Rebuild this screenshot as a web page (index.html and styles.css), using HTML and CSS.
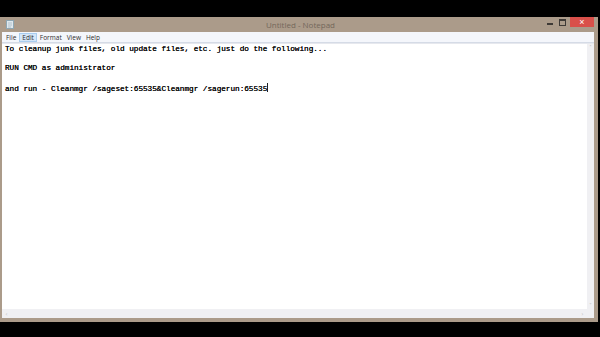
FILE: index.html
```html
<!DOCTYPE html>
<html>
<head>
<meta charset="utf-8">
<link rel="stylesheet" href="styles.css">
</head>
<body>
<div class="window">
  <div class="titlebar">
    <div class="appicon">
      <svg width="8" height="9" viewBox="0 0 8 9"><rect x="0.5" y="0.5" width="7" height="8" fill="#dfe9ee" stroke="#8fa7b3"/><path d="M2 3h4M2 5h4M2 7h3" stroke="#9fb3bd" stroke-width="0.7"/></svg>
    </div>
    <div class="title">Untitled - Notepad</div>
    <div class="controls">
      <div class="btn min"><span></span></div>
      <div class="btn max"><span></span></div>
      <div class="btn close">×</div>
    </div>
  </div>
  <div class="menubar">
    <span class="item">File</span>
    <span class="item active">Edit</span>
    <span class="item">Format</span>
    <span class="item">View</span>
    <span class="item">Help</span>
  </div>
  <div class="client">
    <div class="editrow">
      <div class="edit">To cleanup junk files, old update files, etc. just do the following...

RUN CMD as administrator

and run - Cleanmgr /sageset:65535&amp;Cleanmgr /sagerun:65535<span class="caret"></span></div>
      <div class="vscroll"><span class="arrow">˄</span><span class="arrow">˅</span></div>
    </div>
    <div class="hscroll">
      <span class="harrow">‹</span>
      <span class="hfill"></span>
      <span class="harrow">›</span>
      <span class="grip"></span>
    </div>
  </div>
</div>
</body>
</html>
```
FILE: styles.css
```css
html, body {
  margin: 0;
  padding: 0;
  background: #000;
  width: 600px;
  height: 337px;
  overflow: hidden;
}
.window {
  margin-top: 17px;
  width: 598px;
  height: 305px;
  box-sizing: border-box;
  background: #ab9b8a;
  padding: 0 4px 4px 2px;
  display: flex;
  flex-direction: column;
}
.titlebar {
  height: 15px;
  display: flex;
  align-items: center;
}
.appicon {
  width: 8px;
  height: 9px;
  margin-left: 4px;
  display: flex;
}
.title {
  flex: 1;
  text-align: center;
  font-family: "Open Sans", "Liberation Sans", sans-serif;
  font-size: 8px;
  color: #74685b;
  line-height: 15px;
  padding-left: 44px;
}
.controls {
  display: flex;
  align-self: flex-start;
  height: 11px;
}
.btn {
  width: 13px;
  height: 10px;
  display: flex;
  align-items: center;
  justify-content: center;
}
.min span {
  width: 6px;
  height: 2px;
  background: #3e3a36;
  margin-top: 4px;
}
.max span {
  width: 5px;
  height: 4px;
  border: 1px solid #3e3a36;
  border-top-width: 2px;
}
.close {
  width: 24px;
  height: 10px;
  background: #d9504a;
  color: #fff;
  font-family: "Liberation Sans", sans-serif;
  font-size: 9px;
  line-height: 10px;
  margin-left: 1px;
}
.menubar {
  height: 10px;
  background: #f4f6fb;
  border-bottom: 1px solid #d5dbe6;
  display: flex;
  align-items: center;
  padding-left: 2px;
  font-family: "Open Sans", "Liberation Sans", sans-serif;
  font-size: 6.5px;
  color: #2e2e2e;
}
.item {
  padding: 0 2px;
  height: 9px;
  line-height: 9px;
  margin-right: 1px;
}
.item.active {
  background: #d4e6f8;
  border: 1px solid #a8cdef;
  height: 7px;
  line-height: 7px;
}
.client {
  flex: 1;
  display: flex;
  flex-direction: column;
  background: #fff;
  border-top: 1px solid #e6e8ee;
}
.editrow {
  flex: 1;
  display: flex;
}
.edit {
  flex: 1;
  white-space: pre;
  font-family: "Liberation Mono", monospace;
  font-size: 7.75px;
  line-height: 9.6px;
  color: #0c0c0c;
  padding: 1px 0 0 3px;
  text-shadow: 0 0 0.4px #000;
  letter-spacing: -0.05px;
}
.caret {
  display: inline-block;
  width: 1px;
  height: 9px;
  background: #222;
  vertical-align: -1px;
}
.vscroll {
  width: 7px;
  background: #f0f0f3;
  display: flex;
  flex-direction: column;
  justify-content: space-between;
  align-items: center;
  font-family: "DejaVu Sans", sans-serif;
  font-size: 5px;
  color: #b6b6b6;
}
.arrow {
  line-height: 7px;
}
.hscroll {
  height: 9px;
  background: #f0f0f3;
  display: flex;
  align-items: center;
  font-family: "DejaVu Sans", sans-serif;
  font-size: 6px;
  color: #bcbcbc;
}
.harrow {
  width: 9px;
  text-align: center;
}
.hfill {
  flex: 1;
}
.grip {
  width: 7px;
  height: 9px;
  background: #f0f0f3;
}
```
